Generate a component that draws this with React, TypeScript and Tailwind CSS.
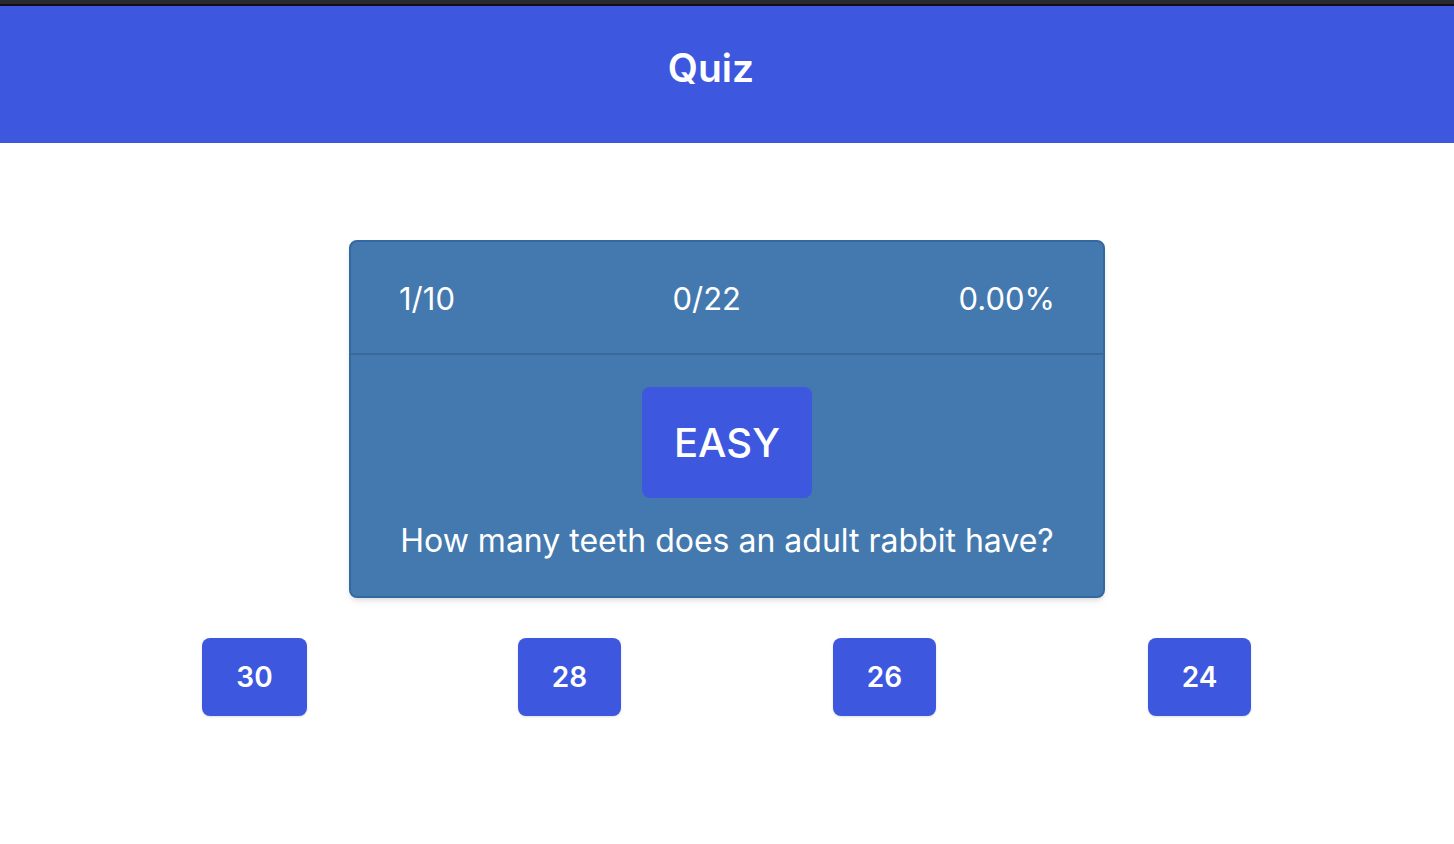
const answers = ["30", "28", "26", "24"];

export default function App() {
  return (
    <div
      className="min-h-[844px] bg-white text-white"
      style={{ fontFamily: "Inter, 'Noto Sans', sans-serif" }}
    >
      <div className="h-[4px] bg-[#2b2a33]" />
      <div className="h-[2px] bg-[#111114]" />
      <header className="h-[137px] bg-[#3d58de] flex items-center justify-center pr-[32px] pb-[15px]">
        <h1 className="text-[39px] font-semibold leading-none">Quiz</h1>
      </header>

      <main className="pt-[97px]">
        <div className="mx-auto w-[756px] rounded-lg border-2 border-[#3468a0] bg-[#4379ae] shadow-md">
          <div className="h-[113px] flex items-center justify-between px-12 pt-[2px] border-b-2 border-[#3a6a9c] text-[31px] leading-9">
            <span>1/10</span>
            <span>0/22</span>
            <span>0.00%</span>
          </div>
          <div className="flex flex-col items-center pt-[32px] pb-[37px]">
            <div className="w-[170px] h-[111px] rounded-lg bg-[#3d58de] flex items-center justify-center text-[40px] font-medium">
              EASY
            </div>
            <p className="mt-[25px] text-[32px] leading-9">
              How many teeth does an adult rabbit have?
            </p>
          </div>
        </div>

        <div className="mx-auto mt-[40px] w-[1260px] grid grid-cols-4">
          {answers.map((a) => (
            <div key={a} className="flex justify-center">
              <button className="h-[78px] px-[34px] rounded-lg bg-[#3d58de] text-[28px] font-semibold shadow-sm">
                {a}
              </button>
            </div>
          ))}
        </div>
      </main>
    </div>
  );
}
